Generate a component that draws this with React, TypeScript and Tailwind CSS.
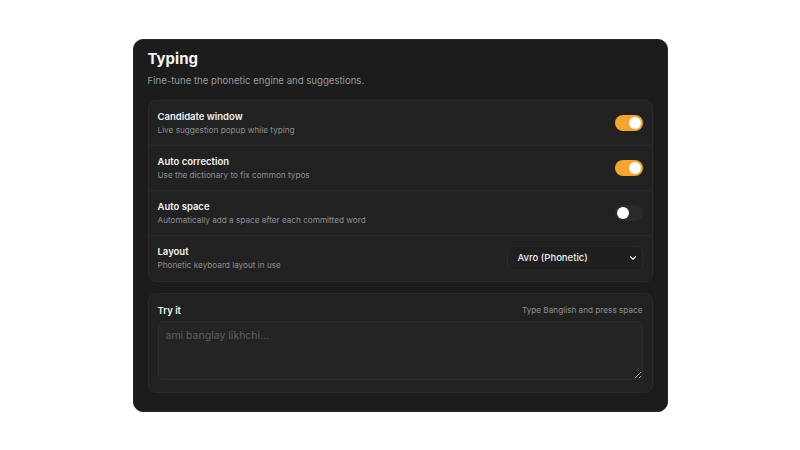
import { ChevronDown } from 'lucide-react';

interface SettingRowProps {
  readonly title: string;
  readonly description: string;
  readonly children: React.ReactNode;
  readonly last?: boolean;
}

function SettingRow({ title, description, children, last }: SettingRowProps) {
  return (
    <div className={`h-[45px] px-[9px] flex items-center justify-between ${last ? '' : 'border-b border-[#2a2a2a]'}`}>
      <div className="flex flex-col gap-[2px]">
        <span className="text-[9.5px] font-semibold leading-[13px] text-[#f2f2f2]">{title}</span>
        <span className="text-[8.2px] leading-[11px] text-[#8e8e8e]">{description}</span>
      </div>
      {children}
    </div>
  );
}

function Toggle({ on }: { readonly on: boolean }) {
  return (
    <div className={`w-[28px] h-[16px] rounded-full flex items-center px-[2px] ${on ? 'bg-[#f6a42c] justify-end' : 'bg-[#2a2a2a] justify-start'}`}>
      <div className="w-[12px] h-[12px] rounded-full bg-white" />
    </div>
  );
}

export default function App() {
  return (
    <div className="w-full h-[450px] bg-white flex items-center justify-center font-['Inter',sans-serif]">
      <div className="w-[535px] h-[373px] rounded-[10px] bg-[#1c1c1c] border border-[#262626] px-[14px] pt-[8px] flex flex-col">
        <h1 className="text-[15px] font-bold leading-[22px] text-[#f5f5f5]">Typing</h1>
        <p className="mt-[4px] text-[9.6px] leading-[13px] text-[#9a9a9a]">Fine-tune the phonetic engine and suggestions.</p>

        <div className="mt-[13px] rounded-[8px] border border-[#2a2a2a] bg-[#212121] flex flex-col">
          <SettingRow title="Candidate window" description="Live suggestion popup while typing">
            <Toggle on />
          </SettingRow>
          <SettingRow title="Auto correction" description="Use the dictionary to fix common typos">
            <Toggle on />
          </SettingRow>
          <SettingRow title="Auto space" description="Automatically add a space after each committed word">
            <Toggle on={false} />
          </SettingRow>
          <SettingRow title="Layout" description="Phonetic keyboard layout in use" last>
            <div className="w-[136px] h-[25px] rounded-[6px] border border-[#2a2a2a] bg-[#1f1f1f] flex items-center justify-between pl-[10px] pr-[4px]">
              <span className="text-[9.5px] font-medium text-[#ededed]">Avro (Phonetic)</span>
              <ChevronDown className="w-[10px] h-[10px] text-[#e5e5e5]" strokeWidth={3} />
            </div>
          </SettingRow>
        </div>

        <div className="mt-[11px] rounded-[8px] border border-[#2a2a2a] bg-[#212121] px-[9px] pt-[10px] pb-[12px] flex flex-col">
          <div className="flex items-center justify-between">
            <span className="text-[9.5px] font-semibold leading-[13px] text-[#f2f2f2]">Try it</span>
            <span className="text-[8.2px] text-[#8e8e8e]">Type Banglish and press space</span>
          </div>
          <textarea
            className="mt-[4px] h-[59px] w-full rounded-[6px] border border-[#2c2c2c] bg-[#242424] px-[7px] py-[6px] text-[10.5px] text-[#e5e5e5] placeholder:text-[#5f5f5f] outline-none resize-y"
            placeholder="ami banglay likhchi..."
          />
        </div>
      </div>
    </div>
  );
}
